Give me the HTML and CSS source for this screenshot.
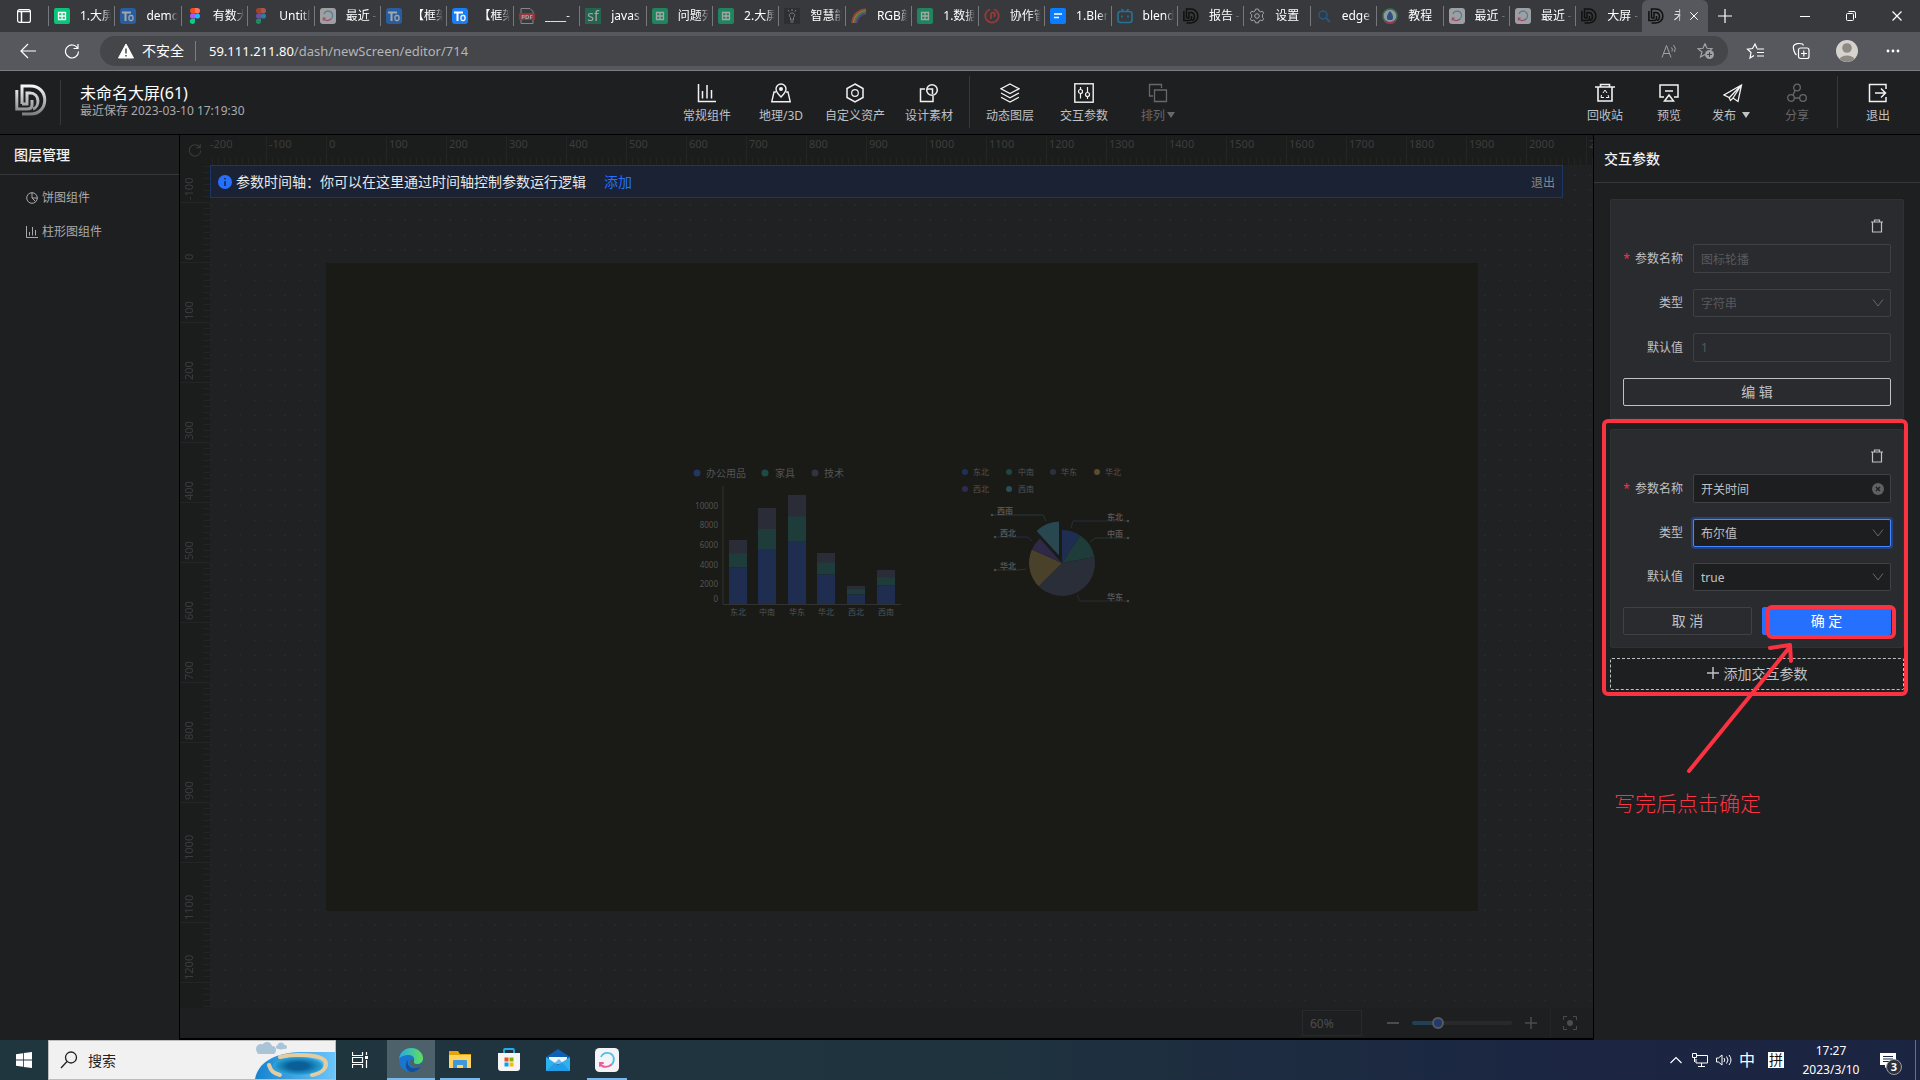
FILE: index.html
```html
<!DOCTYPE html>
<html lang="zh-CN">
<head>
    <meta charset="UTF-8">
    <meta name="viewport" content="width=device-width, initial-scale=1.0">
    <title>未命名大屏(61)</title>
    <link rel="stylesheet" href="styles.css">
</head>
<body>
    <!-- shared icons -->
    <svg class="sprite" aria-hidden="true">
        <symbol id="sheet" viewBox="0 0 16 16"><rect width="16" height="16" rx="2" fill="#0dc279"/><path d="M4.5 4.5h7v7h-7zM8 4.5v7M4.5 8h7" fill="none" stroke="#fff" stroke-width="1.3"/></symbol>
        <symbol id="todoc" viewBox="0 0 16 16"><rect width="16" height="16" rx="3" fill="#1a7df5"/><path d="M2 4.500h9M5.500 4.500v8.500" fill="none" stroke="#fff" stroke-width="2"/><rect x="9" y="7.500" width="4" height="5" rx="1.500" fill="none" stroke="#fff" stroke-width="1.300"/></symbol>
        <symbol id="figma" viewBox="0 0 16 16"><path d="M8 0H5.700a2.600 2.600 0 0 0 0 5.300H8z" fill="#f24e1e"/><path d="M8 0h2.300a2.600 2.600 0 0 1 0 5.300H8z" fill="#ff7262"/><path d="M8 5.300H5.700a2.600 2.600 0 0 0 0 5.300H8z" fill="#a259ff"/><circle cx="10.400" cy="8" r="2.600" fill="#1abcfe"/><path d="M8 10.700H5.700A2.600 2.600 0 1 0 8 13.300z" fill="#0acf83"/></symbol>
        <symbol id="sync" viewBox="0 0 16 16"><rect width="16" height="16" rx="3" fill="#f4f4f6"/><path d="M4 6A4.500 4.500 0 0 1 12.500 6.500c.3 2-.3 3.500-1.500 4.700" fill="none" stroke="#4cc0ea" stroke-width="1.200"/><path d="M11 11c-2 2-6 2.500-7.500-.5M3.300 12.500V10h2.500" fill="none" stroke="#ee5b9a" stroke-width="1.200"/></symbol>
        <symbol id="bulb" viewBox="0 0 16 16"><rect width="16" height="16" fill="#27282b"/><path d="M6.500 12V9.500C4 7 6 5 8 5s4 2 1.500 4.500V12zM6.500 14h3M8 1v2M4 2l1 1.500M12 2l-1 1.500" fill="none" stroke="#bbb"/></symbol>
        <symbol id="rainbow" viewBox="0 0 16 16"><path d="M1 15C1.500 7 7 1.500 15 1" fill="none" stroke="#e34b3c" stroke-width="1.600"/><path d="M2.500 15C3 8 8 3 15 2.500" fill="none" stroke="#e8a73a" stroke-width="1.600"/><path d="M4 15C4.500 9 9 4.500 15 4" fill="none" stroke="#45b35a" stroke-width="1.600"/><path d="M5.500 15C6 10 10 6 15 5.500" fill="none" stroke="#784bc0" stroke-width="1.600"/></symbol>
        <symbol id="redring" viewBox="0 0 16 16"><path d="M6 1.500a6.700 6.700 0 1 0 4 0M7 11V6.500a2 2 0 1 1 2.500 2" fill="none" stroke="#e23b34" stroke-width="1.800"/></symbol>
        <symbol id="bluedoc" viewBox="0 0 16 16"><rect width="16" height="16" rx="2" fill="#0a7cff"/><path d="M4 6h8M4 9.500h5" stroke="#fff" stroke-width="1.600"/></symbol>
        <symbol id="bili" viewBox="0 0 16 16"><path d="M4.500 1l2 2.500M11.500 1l-2 2.500" stroke="#13a4dd" stroke-width="1.500"/><rect x="1" y="3.500" width="14" height="11" rx="2.500" fill="none" stroke="#13a4dd" stroke-width="1.600"/><path d="M5 7.500v2M11 7.500v2" stroke="#13a4dd" stroke-width="1.600"/></symbol>
        <symbol id="dlogo" viewBox="0 0 32 32"><g fill="none" stroke="currentColor" stroke-width="3"><path d="M1.800 6v19H12q5 0 5-4v-5"/><path d="M7 20V2h8.500c19 0 19 28 0 28H7"/><path d="M7 20h5V9h3c10 0 10 14 3 16"/></g></symbol>
        <symbol id="gear" viewBox="0 0 16 16"><path d="M8 1l1.500.2.500 1.800 1.500.8 2-.5 1.200 2-1.300 1.400v2.600l1.300 1.400-1.200 2-2-.5-1.500.8-.5 1.800h-3L6 13l-1.500-.8-2 .5-1.200-2 1.300-1.400V6.700L1.300 5.300l1.200-2 2 .5L6 3l.5-1.800z" fill="none" stroke="#a6a7aa"/><circle cx="8" cy="8" r="2.300" fill="none" stroke="#a6a7aa"/></symbol>
        <symbol id="lens" viewBox="0 0 16 16"><circle cx="7" cy="7" r="4" fill="none" stroke="#1673c0" stroke-width="1.500"/><path d="M10 10l4 4" stroke="#1673c0" stroke-width="1.800"/></symbol>
        <symbol id="ball" viewBox="0 0 16 16"><circle cx="8" cy="8" r="7" fill="#dfe6ee" stroke="#2ea56b" stroke-width="1.500"/><path d="M3 13a7 7 0 0 0 10 0" fill="none" stroke="#d33b66" stroke-width="2"/><path d="M8 3c3 3 4 7 2 9H6C4 10 5 6 8 3z" fill="#2a62b8"/></symbol>
        <symbol id="trash" viewBox="0 0 14 14"><path d="M1 3h12M4.500 3V1h5v2M2.500 3v10h9V3" fill="none" stroke="currentColor" stroke-width="1.200"/></symbol>
        <symbol id="chevron" viewBox="0 0 12 12"><path d="M1 2.500l5 6.500 5-6.500" fill="none" stroke="currentColor"/></symbol>
        <symbol id="close" viewBox="0 0 12 12"><path d="M1.500 1.500l9 9M10.500 1.500l-9 9" stroke="currentColor" stroke-width="1.200"/></symbol>
        <symbol id="reload" viewBox="0 0 16 16"><path d="M13.500 5A6.500 6.500 0 1 0 14.500 8.500M14 1v4.500H9.500" fill="none" stroke="currentColor" stroke-width="1.200"/></symbol>
    </svg>

    <!-- browser tabs -->
    <div class="tab-bar">
        <button class="tab-menu" aria-label="标签操作"><svg width="14" height="14" viewBox="0 0 14 14"><rect x=".6" y=".6" width="12.800" height="12.800" rx="2" fill="none" stroke="#fff" stroke-width="1.200"/><path d="M1 2.500h12M4.500 3v10" stroke="#fff" stroke-width="1.500"/></svg></button>
        <nav class="tabs">
            <a href="#" class="tab"><svg><use href="#sheet"/></svg><span>1.大屏</span></a>
            <a href="#" class="tab dim"><svg><use href="#todoc"/></svg><span>demo</span></a>
            <a href="#" class="tab"><svg><use href="#figma"/></svg><span>有数大</span></a>
            <a href="#" class="tab dim"><svg><use href="#figma"/></svg><span>Untitl</span></a>
            <a href="#" class="tab dim"><svg><use href="#sync"/></svg><span>最近 -</span></a>
            <a href="#" class="tab dim"><svg><use href="#todoc"/></svg><span>【框架</span></a>
            <a href="#" class="tab"><svg><use href="#todoc"/></svg><span>【框架</span></a>
            <a href="#" class="tab dim"><svg viewBox="0 0 16 16"><path d="M2 .5h9l3 3v12H2z" fill="#3a3b3e" stroke="#c8c8c8"/><rect y="5" width="16" height="7" rx="1" fill="#d9383a"/><text x="8" y="11" font-size="6" font-weight="700" text-anchor="middle" fill="#fff">PDF</text></svg><span>____-</span></a>
            <a href="#" class="tab dim"><svg viewBox="0 0 16 16"><rect width="16" height="16" fill="#128a5c"/><text x="8" y="13" font-size="14" text-anchor="middle" fill="#fff">sf</text></svg><span>javas</span></a>
            <a href="#" class="tab dim"><svg><use href="#sheet"/></svg><span>问题列</span></a>
            <a href="#" class="tab dim"><svg><use href="#sheet"/></svg><span>2.大屏</span></a>
            <a href="#" class="tab dim"><svg><use href="#bulb"/></svg><span>智慧能</span></a>
            <a href="#" class="tab dim"><svg><use href="#rainbow"/></svg><span>RGB颜</span></a>
            <a href="#" class="tab dim"><svg><use href="#sheet"/></svg><span>1.数据</span></a>
            <a href="#" class="tab dim"><svg><use href="#redring"/></svg><span>协作管</span></a>
            <a href="#" class="tab"><svg><use href="#bluedoc"/></svg><span>1.Blen</span></a>
            <a href="#" class="tab dim"><svg><use href="#bili"/></svg><span>blend</span></a>
            <a href="#" class="tab dim dark"><svg><use href="#dlogo"/></svg><span>报告 -</span></a>
            <a href="#" class="tab"><svg><use href="#gear"/></svg><span>设置</span></a>
            <a href="#" class="tab dim"><svg><use href="#lens"/></svg><span>edge</span></a>
            <a href="#" class="tab dim"><svg><use href="#ball"/></svg><span>教程</span></a>
            <a href="#" class="tab dim"><svg><use href="#sync"/></svg><span>最近 -</span></a>
            <a href="#" class="tab dim"><svg><use href="#sync"/></svg><span>最近 -</span></a>
            <a href="#" class="tab dark"><svg><use href="#dlogo"/></svg><span>大屏 -</span></a>
            <a href="#" class="tab dark active"><svg><use href="#dlogo"/></svg><span>未</span><svg class="tab-close"><use href="#close"/></svg></a>
        </nav>
        <button class="new-tab" aria-label="新标签"><svg width="14" height="14" viewBox="0 0 14 14"><path d="M7 0v14M0 7h14" stroke="#fff" stroke-width="1.200"/></svg></button>
        <div class="window-buttons">
            <button aria-label="最小化"><svg width="10" height="10" viewBox="0 0 10 10"><path d="M0 5.500h10" stroke="#fff"/></svg></button>
            <button aria-label="还原"><svg width="10" height="10" viewBox="0 0 10 10"><rect x=".5" y="2.500" width="7" height="7" rx="1" fill="none" stroke="#fff"/><path d="M2.500.5H8a1.500 1.500 0 0 1 1.500 1.500v5" fill="none" stroke="#fff"/></svg></button>
            <button aria-label="关闭"><svg width="12" height="12"><use href="#close"/></svg></button>
        </div>
    </div>

    <!-- address bar -->
    <div class="address-bar">
        <button class="nav-button" aria-label="后退"><svg width="16" height="16" viewBox="0 0 16 16"><path d="M16 8H1M8 1L1 8l7 7" fill="none" stroke="#fff" stroke-width="1.200"/></svg></button>
        <button class="nav-button" aria-label="刷新"><svg width="16" height="16"><use href="#reload"/></svg></button>
        <div class="address">
            <svg width="16" height="16" viewBox="0 0 16 16"><path d="M8 1L.5 15h15z" fill="#fff" stroke="#fff" stroke-linejoin="round"/><path d="M8 5.500v5M8 12v1.500" stroke="#45464a" stroke-width="1.500"/></svg>
            <span class="insecure">不安全</span>
            <span class="url"><b>59.111.211.80</b>/dash/newScreen/editor/714</span>
            <svg class="read" width="16" height="16" viewBox="0 0 16 16"><path d="M1 14.500L5.500 2.500 10 14.500M2.500 10.500h6M10.500 4.500q1.500 1.500.5 4M12.500 2q3 3 1 7" fill="none" stroke="#a0a1a4"/></svg>
            <svg width="18" height="18" viewBox="0 0 18 18"><path d="M8 1.500l2 4.800 5 .4-2 2M8 1.500L6 6.300l-5 .4 4 3.300-1.500 5L8 12.500" fill="none" stroke="#a0a1a4" stroke-width="1.200"/><circle cx="12.500" cy="12.500" r="4.500" fill="#a0a1a4"/><path d="M12.500 10v5M10 12.500h5" stroke="#45464a"/></svg>
        </div>
        <button class="bar-button" aria-label="收藏夹"><svg width="18" height="18" viewBox="0 0 18 18"><path d="M11 6.500L9 2 6.500 6.500l-5 .7L5 10.500 4 16l4-2.500" fill="none" stroke="#fff" stroke-width="1.200"/><path d="M11 7h7M11 10.500h7M11 14h7" stroke="#fff" stroke-width="1.200"/></svg></button>
        <button class="bar-button" aria-label="集锦"><svg width="18" height="18" viewBox="0 0 18 18"><rect x="6.500" y="6" width="10.500" height="10.500" rx="2" fill="none" stroke="#fff" stroke-width="1.200"/><path d="M11.800 8.500v6M9 11.500h6M4.500 13C2 11 1 6 1.500 4c1-2.500 6-3 9-2l1 1.500" fill="none" stroke="#fff" stroke-width="1.200"/></svg></button>
        <button class="bar-button" aria-label="个人资料"><svg width="22" height="22" viewBox="0 0 22 22"><circle cx="11" cy="11" r="11" fill="#d6d2cd"/><circle cx="11" cy="8" r="4.800" fill="#8f8984"/><path d="M3.500 19a8 5.500 0 0 1 15 0 11 11 0 0 1-15 0z" fill="#8f8984"/></svg></button>
        <button class="bar-button" aria-label="更多"><svg width="14" height="4" viewBox="0 0 14 4"><g fill="#fff"><circle cx="2" cy="2" r="1.400"/><circle cx="7" cy="2" r="1.400"/><circle cx="12" cy="2" r="1.400"/></g></svg></button>
    </div>

    <header class="app-header">
        <div class="brand">
            <div class="logo">
                <svg width="32" height="32" viewBox="0 0 32 32"><defs><linearGradient id="silver" x1="0" y1="0" x2="0" y2="32" gradientUnits="userSpaceOnUse"><stop offset="0" stop-color="#fff"/><stop offset="1" stop-color="#77787a"/></linearGradient></defs><g fill="none" stroke="url(#silver)" stroke-width="3"><path d="M1.800 6v19H12q5 0 5-4v-5"/><path d="M7 20V2h8.500c19 0 19 28 0 28H7"/><path d="M7 20h5V9h3c10 0 10 14 3 16"/></g></svg>
            </div>
            <div class="brand-text">
                <h1>未命名大屏(61)</h1>
                <p>最近保存 2023-03-10 17:19:30</p>
            </div>
        </div>
        <div class="tools">
            <button class="tool"><svg viewBox="0 0 20 20"><path d="M1.500 1v17.500H19M5.500 15.500V8M10 15.500V2M14.500 15.500V7" fill="none" stroke="currentColor" stroke-width="1.500"/></svg>常规组件</button>
            <button class="tool"><svg viewBox="0 0 20 20"><path d="M5 9H3L.8 18.700h18.400L17 9h-2" fill="none" stroke="currentColor" stroke-width="1.400"/><path d="M10 14C6 10 5 8 5 6a5 5 0 0 1 10 0c0 2-1 4-5 8z" fill="none" stroke="currentColor" stroke-width="1.400"/><circle cx="10" cy="6" r="2" fill="currentColor"/></svg>地理/3D</button>
            <button class="tool"><svg viewBox="0 0 20 20"><path d="M10 1l8 4.500v9L10 19l-8-4.500v-9z" fill="none" stroke="currentColor" stroke-width="1.500"/><circle cx="10" cy="10" r="3.300" fill="none" stroke="currentColor" stroke-width="1.200"/></svg>自定义资产</button>
            <button class="tool"><svg viewBox="0 0 20 20"><path d="M6 6H1.500v12.500H14V13M8 6h5.500v5" fill="none" stroke="currentColor" stroke-width="1.500"/><circle cx="13" cy="7" r="5.300" fill="none" stroke="currentColor" stroke-width="1.500"/></svg>设计素材</button>
            <i class="divider"></i>
            <button class="tool"><svg viewBox="0 0 20 20"><path d="M10 1l9 4.800-9 4.800-9-4.800zM1 10l9 4.800 9-4.800M1 14.200L10 19l9-4.800" fill="none" stroke="currentColor" stroke-width="1.300"/></svg>动态图层</button>
            <button class="tool"><svg viewBox="0 0 20 20"><rect x=".8" y=".8" width="18.400" height="18.400" fill="none" stroke="currentColor" stroke-width="1.400"/><path d="M6.500 4v2.500M6.500 11v4.500M13.500 4v5M13.500 14v2" stroke="currentColor" stroke-width="1.200"/><circle cx="6.500" cy="8.500" r="2" fill="none" stroke="currentColor" stroke-width="1.200"/><circle cx="13.500" cy="11.500" r="2" fill="none" stroke="currentColor" stroke-width="1.200"/></svg>交互参数</button>
            <button class="tool disabled" disabled><svg viewBox="0 0 20 20"><path d="M5 13H1.500V1.500h12V5M6.500 7h12v11.500h-12z" fill="none" stroke="currentColor" stroke-width="1.300"/></svg><span>排列<i class="caret"></i></span></button>
        </div>
        <div class="actions">
            <button class="tool"><svg viewBox="0 0 20 20"><path d="M0 4h20M5.500 4V1.500h9V4M3 4v14h14V4" fill="none" stroke="currentColor" stroke-width="1.600"/><path d="M8 10l2-3 2 3M13 12l1 2.500h-3M6.500 12L6 14.500h3" fill="none" stroke="currentColor"/></svg>回收站</button>
            <button class="tool"><svg viewBox="0 0 20 20"><path d="M5 14H1V2h18v12h-4M6 8h8" fill="none" stroke="currentColor" stroke-width="1.500"/><path d="M10 12l4.500 6h-9z" fill="none" stroke="currentColor" stroke-width="1.500"/></svg>预览</button>
            <button class="tool"><svg viewBox="0 0 20 20"><path d="M18.500 2L1 12l5 2.500 1.500 3L10 15l5 3.500zM18 2.500L6.500 14.500M18 2.500L10 15" fill="none" stroke="currentColor" stroke-width="1.300"/></svg><span>发布<i class="caret"></i></span></button>
            <button class="tool disabled" disabled><svg viewBox="0 0 20 20"><g fill="none" stroke="currentColor" stroke-width="1.300"><circle cx="10" cy="4.500" r="3.300"/><circle cx="4" cy="15" r="3.300"/><circle cx="16" cy="15" r="3.300"/><path d="M8 7.500L6 12M7.500 15h5"/></g></svg>分享</button>
            <i class="divider"></i>
            <button class="tool"><svg viewBox="0 0 20 20"><path d="M18 6V1.500H1.500v17H18V14M7 10h10M13 5.500l4.500 4.500-4.500 4.500" fill="none" stroke="currentColor" stroke-width="1.500"/></svg>退出</button>
        </div>
    </header>

    <main class="workspace">
        <aside class="layers">
            <h2>图层管理</h2>
            <ul>
                <li><svg width="12" height="12" viewBox="0 0 12 12"><circle cx="6" cy="6" r="5.300" fill="none" stroke="currentColor"/><path d="M6 .5V6h5.500M6 6l3.500 3.500" fill="none" stroke="currentColor"/></svg>饼图组件</li>
                <li><svg width="12" height="12" viewBox="0 0 12 12"><path d="M.5 0v11.500H12M3.500 9.500V6M6.500 9.500V1M9.500 9.500V4" fill="none" stroke="currentColor"/></svg>柱形图组件</li>
            </ul>
        </aside>

        <section class="canvas">
            <div class="corner"><svg width="14" height="14"><use href="#reload"/></svg></div>
            <div class="ruler-x">
                <span>-200</span><span>-100</span><span>0</span><span>100</span><span>200</span><span>300</span><span>400</span><span>500</span><span>600</span><span>700</span><span>800</span><span>900</span><span>1000</span><span>1100</span><span>1200</span><span>1300</span><span>1400</span><span>1500</span><span>1600</span><span>1700</span><span>1800</span><span>1900</span><span>2000</span><span>2100</span>
            </div>
            <div class="ruler-y">
                <span>-100</span><span>0</span><span>100</span><span>200</span><span>300</span><span>400</span><span>500</span><span>600</span><span>700</span><span>800</span><span>900</span><span>1000</span><span>1100</span><span>1200</span><span></span>
            </div>
            <div class="board">
                <div class="banner">
                    <svg width="14" height="14" viewBox="0 0 14 14"><circle cx="7" cy="7" r="7" fill="#2670ff"/><path d="M7 3v1.500M7 6v5" stroke="#1a2233" stroke-width="1.500"/></svg>
                    <p>参数时间轴：你可以在这里通过时间轴控制参数运行逻辑</p>
                    <a href="#">添加</a>
                    <button>退出</button>
                </div>
                <div class="stage">
                    <svg class="bar-chart" width="222" height="170" viewBox="0 0 222 170">
                        <g class="legend">
                            <circle cx="17" cy="23" r="3.500" fill="#223661"/><text x="26" y="27">办公用品</text>
                            <circle cx="85" cy="23" r="3.500" fill="#1f4a45"/><text x="95" y="27">家具</text>
                            <circle cx="135" cy="23" r="3.500" fill="#30343f"/><text x="144" y="27">技术</text>
                        </g>
                        <g class="scale">
                            <text x="38" y="59">10000</text><text x="38" y="78">8000</text><text x="38" y="98">6000</text><text x="38" y="118">4000</text><text x="38" y="137">2000</text><text x="38" y="152">0</text>
                        </g>
                        <g fill="#2a2d38"><path d="M49 90h18v14H49zM78 58h18v21H78zM108 45h18v22h-18zM137 103h18v10h-18zM167 136h18v4h-18zM197 120h18v8h-18z"/></g>
                        <g fill="#1e3c3a"><path d="M49 103.500h18v14H49zM78 79h18v20H78zM108 66.500h18V91h-18zM137 112.500h18v12h-18zM167 139.500h18v5h-18zM197 127.500h18v8h-18z"/></g>
                        <g fill="#1f2e50"><path d="M49 117.500h18V154H49zM78 99h18v55H78zM108 91h18v63h-18zM137 124.500h18V154h-18zM167 144.500h18v9.500h-18zM197 135.500h18V154h-18z"/></g>
                        <path d="M43 36v118.500h178" fill="none" stroke="#323331"/>
                        <g class="category">
                            <text x="58" y="165">东北</text><text x="87" y="165">中南</text><text x="117" y="165">华东</text><text x="146" y="165">华北</text><text x="176" y="165">西北</text><text x="206" y="165">西南</text>
                        </g>
                    </svg>
                    <svg class="pie-chart" width="190" height="160" viewBox="0 0 190 160">
                        <circle cx="15" cy="22" r="3" fill="#1f3157"/><text x="23" y="25">东北</text>
                        <circle cx="59" cy="22" r="3" fill="#1f4541"/><text x="68" y="25">中南</text>
                        <circle cx="103" cy="22" r="3" fill="#2d313d"/><text x="111" y="25">华东</text>
                        <circle cx="147" cy="22" r="3" fill="#5a4d2b"/><text x="155" y="25">华北</text>
                        <circle cx="15" cy="39" r="3" fill="#302a52"/><text x="23" y="42">西北</text>
                        <circle cx="59" cy="39" r="3" fill="#2a4e58"/><text x="68" y="42">西南</text>
                        <path d="M112 113V80a33 33 0 0 1 18.200 5.500z" fill="#1f2e50"/>
                        <path d="M112 113l18.200-27.500A33 33 0 0 1 144.500 107z" fill="#1e3c3a"/>
                        <path d="M112 113l32.500-6a33 33 0 0 1-55.800 29.300z" fill="#2a2e38"/>
                        <path d="M112 113l-23.300 23.300A33 33 0 0 1 81.900 99.600z" fill="#4a412b"/>
                        <path d="M112 113L81.900 99.600a33 33 0 0 1 8-11.100z" fill="#2d2947"/>
                        <path d="M109 105.500L86.500 81A34 34 0 0 1 109 71.500z" fill="#284750"/>
                        <path d="M42 65h51l3 6" fill="none" stroke="#24383b"/>
                        <path d="M45 87h32l5 4M177 71h-54l-2 7" fill="none" stroke="#272c43"/>
                        <path d="M45 120h24l7-1" fill="none" stroke="#353225"/>
                        <path d="M177 88h-32l-5 4" fill="none" stroke="#203834"/>
                        <path d="M177 151h-47l-3-6" fill="none" stroke="#292c33"/>
                        <g fill="#4a4b49"><circle cx="42" cy="65" r="1.300"/><circle cx="45" cy="87" r="1.300"/><circle cx="45" cy="120" r="1.300"/><circle cx="178" cy="71" r="1.300"/><circle cx="178" cy="88" r="1.300"/><circle cx="178" cy="151" r="1.300"/></g>
                        <g class="callout"><text x="47" y="64">西南</text><text x="50" y="86">西北</text><text x="50" y="119">华北</text><text x="157" y="70">东北</text><text x="157" y="87">中南</text><text x="157" y="150">华东</text></g>
                    </svg>
                </div>
            </div>
            <div class="zoom-bar">
                <input type="text" class="zoom-value" value="60%" aria-label="缩放比例" readonly>
                <button aria-label="缩小"><svg width="12" height="12" viewBox="0 0 12 12"><path d="M0 6h12" stroke="currentColor" stroke-width="2"/></svg></button>
                <input type="range" class="zoom-range" min="0" max="100" value="23" aria-label="缩放">
                <button aria-label="放大"><svg width="12" height="12" viewBox="0 0 12 12"><path d="M0 6h12M6 0v12" stroke="currentColor" stroke-width="1.500"/></svg></button>
                <button class="fit" aria-label="适应屏幕"><svg width="14" height="14" viewBox="0 0 14 14"><path d="M.5 4V.5H4M10 .5h3.500V4M13.500 10v3.500H10M4 13.500H.5V10" fill="none" stroke="currentColor"/><circle cx="7" cy="7" r="3" fill="currentColor"/></svg></button>
            </div>
        </section>

        <aside class="params">
            <h2>交互参数</h2>
            <div class="param-list">
                <form class="card">
                    <button type="button" class="delete" aria-label="删除"><svg width="14" height="14"><use href="#trash"/></svg></button>
                    <div class="field">
                        <label class="required" for="name1">参数名称</label>
                        <input type="text" id="name1" value="图标轮播" disabled>
                    </div>
                    <div class="field">
                        <label for="type1">类型</label>
                        <select id="type1" disabled><option>字符串</option></select>
                        <svg class="suffix"><use href="#chevron"/></svg>
                    </div>
                    <div class="field">
                        <label for="value1">默认值</label>
                        <input type="text" id="value1" value="1" disabled>
                    </div>
                    <div class="buttons">
                        <button type="button" class="btn edit">编 辑</button>
                    </div>
                </form>
                <form class="card">
                    <button type="button" class="delete" aria-label="删除"><svg width="14" height="14"><use href="#trash"/></svg></button>
                    <div class="field">
                        <label class="required" for="name2">参数名称</label>
                        <input type="text" id="name2" value="开关时间">
                        <svg class="suffix" viewBox="0 0 12 12"><circle cx="6" cy="6" r="6" fill="#5f6063"/><path d="M4 4l4 4M8 4L4 8" stroke="#1d1e20" stroke-width="1.200"/></svg>
                    </div>
                    <div class="field">
                        <label for="type2">类型</label>
                        <select id="type2" class="focused"><option>布尔值</option></select>
                        <svg class="suffix"><use href="#chevron"/></svg>
                    </div>
                    <div class="field">
                        <label for="value2">默认值</label>
                        <select id="value2"><option>true</option></select>
                        <svg class="suffix"><use href="#chevron"/></svg>
                    </div>
                    <div class="buttons">
                        <button type="button" class="btn">取 消</button>
                        <button type="button" class="btn primary">确 定</button>
                    </div>
                </form>
                <button class="add-param"><svg width="12" height="12" viewBox="0 0 12 12"><path d="M0 6h12M6 0v12" stroke="currentColor" stroke-width="1.500"/></svg>添加交互参数</button>
            </div>

            <!-- red markup over the panel -->
            <div class="mark mark-card"></div>
            <div class="mark mark-button"></div>
            <svg class="mark-arrow" width="110" height="134" viewBox="0 0 110 134"><path d="M4 128L104 5M85 5l20-3 1 16" fill="none" stroke="#fb3241" stroke-width="4" stroke-linecap="round" stroke-linejoin="round"/></svg>
            <p class="mark-text">写完后点击确定</p>
        </aside>
    </main>

    <footer class="taskbar">
        <button class="task" aria-label="开始"><svg width="16" height="16" viewBox="0 0 16 16"><path d="M0 2.200L7 1.200v6.300H0zM7.800 1L16 0v7.500H7.800zM0 8.400h7v6.400l-7-1zM7.800 8.400H16V16l-8.200-1.100z" fill="#fff"/></svg></button>
        <div class="search">
            <svg width="18" height="18" viewBox="0 0 18 18"><circle cx="11" cy="6.500" r="5.500" fill="none" stroke="#222" stroke-width="1.300"/><path d="M7 10.500L1 17" stroke="#222" stroke-width="1.300"/></svg>
            <input type="text" placeholder="搜索" aria-label="搜索">
            <svg class="doodle" width="80" height="38" viewBox="0 0 80 38"><defs><linearGradient id="sea"><stop offset="0" stop-color="#1583cf"/><stop offset="1" stop-color="#6cc5fb"/></linearGradient><radialGradient id="hole"><stop offset=".4" stop-color="#0b5f98"/><stop offset="1" stop-color="#2aa7dc"/></radialGradient></defs><path d="M0 38C3 22 18 12 45 11h35v27z" fill="url(#sea)"/><g fill="#a9c4d6"><circle cx="6" cy="8" r="5"/><circle cx="12" cy="6" r="5"/><circle cx="17" cy="9" r="4"/><rect x="2" y="8" width="18" height="5" rx="2.500"/><circle cx="26" cy="5" r="3.500"/><rect x="21" y="4" width="11" height="4" rx="2"/></g><path d="M25 16c12-3 46-4 46 7 0 6-6 9-14 11M14 24c2 6 4 8 11 10" fill="none" stroke="#e3cda0" stroke-width="4" stroke-linecap="round"/><ellipse cx="43" cy="25" rx="25" ry="9" fill="url(#hole)"/></svg>
        </div>
        <button class="task" aria-label="任务视图"><svg width="16" height="16" viewBox="0 0 16 16"><path d="M.5 0v3.500h10V0M.5 16v-3.500h10V16M.5 5.500h10v5H.5zM14.500 0v3M14.500 8v8" fill="none" stroke="#fff" stroke-width="1.200"/><path d="M13 4h3v3h-3z" fill="#fff"/></svg></button>
        <div class="apps">
            <button class="task open current" aria-label="Edge"><svg width="24" height="24" viewBox="0 0 24 24"><defs><linearGradient id="e1"><stop offset="0" stop-color="#2aa8e8"/><stop offset="1" stop-color="#5fe05a"/></linearGradient></defs><circle cx="12" cy="12" r="12" fill="#1976cf"/><path d="M0 11C1 4 6 0 12 0c7 0 12 5 12 10 0 4-3 6-6 6-3 0-4-1-3-3 1-3-1-6-5-6C5 7 1 9 0 11z" fill="url(#e1)"/><path d="M10 11c-3 3-1 9 5 9 4 0 6-1 7-2-2 4-6 6-10 6C6 23 5 14 10 11z" fill="#124f9e"/><path d="M15 13c-1 2 1 3.500 3.500 3.500 2 0 4-1 5-2.500l-1 4c-5 3-12 1-12-4 0-3 5-4 4.500-1z" fill="#4c6169"/></svg></button>
            <button class="task open" aria-label="文件资源管理器"><svg width="22" height="20" viewBox="0 0 22 20"><path d="M0 1h9l2 3h11v14H0z" fill="#e5a50a"/><path d="M0 5h22v13H0z" fill="#ffd35c"/><path d="M4 18v-7q0-1 1-1h12q1 0 1 1v7h-4v-3H8v3z" fill="#3f97dd"/></svg></button>
            <button class="task" aria-label="应用商店"><svg width="24" height="24" viewBox="0 0 24 24"><path d="M7 6V2q0-1 1-1h8q1 0 1 1v4" fill="none" stroke="#23aef0" stroke-width="1.800"/><path d="M1 5h22v15q0 3-3 3H4q-3 0-3-3z" fill="#f5f5f5"/><path d="M7.500 9.500h4v4h-4z" fill="#f04e1f"/><path d="M12.500 9.500h4v4h-4z" fill="#7cba00"/><path d="M7.500 14.500h4v4h-4z" fill="#00a4ef"/><path d="M12.500 14.500h4v4h-4z" fill="#ffb900"/></svg></button>
            <button class="task" aria-label="邮件"><svg width="24" height="24" viewBox="0 0 24 24"><path d="M0 9L12 1l12 8v4H0z" fill="#0f5fb3"/><path d="M3 9h18v7H3z" fill="#eef4fa"/><path d="M0 9l12 8 12-8v14H0z" fill="#2fb0f0"/><path d="M0 23L13 11l11 12z" fill="#1b8fdf" opacity=".6"/></svg></button>
            <button class="task open" aria-label="文档"><svg width="24" height="24" viewBox="0 0 16 16"><use href="#sync"/></svg></button>
        </div>
        <div class="tray">
            <span class="tray-icon"><svg width="12" height="8" viewBox="0 0 12 8"><path d="M.5 7L6 1.500 11.500 7" fill="none" stroke="#fff" stroke-width="1.200"/></svg></span>
            <span class="tray-icon"><svg width="16" height="14" viewBox="0 0 16 14"><path d="M5 2.500h10.500V10H4V6M9.500 10v3M6 13.500h7M.5.500h4v4h-4zM2.500 4.500V9" fill="none" stroke="#fff"/></svg></span>
            <span class="tray-icon"><svg width="16" height="14" viewBox="0 0 16 14"><path d="M.5 5v4h2L6 12V2L2.500 5zM8 5q1.500 2 0 4M10.500 3.500q3 3.500 0 7M13 2q4 5 0 10" fill="none" stroke="#fff"/></svg></span>
            <span class="ime">中</span>
            <span class="pinyin"><b>拼</b></span>
            <span class="clock">17:27<br>2023/3/10</span>
            <span class="notice"><svg width="16" height="15" viewBox="0 0 16 15"><path d="M0 0h16v12H9l-4 3v-3H0z" fill="#fff"/><path d="M3 3.500h10M3 6h10M3 8.500h6" stroke="#1c2843"/></svg><b>3</b></span>
        </div>
    </footer>
</body>
</html>
```

FILE: styles.css
```css
:root {
    --panel: #1e1f21;
    --card: #2a2b2f;
    --line: #404145;
    --text: #c0c1c4;
    --blue: #2670ff;
    --red: #fb3241;
    --font: "Noto Sans", "Noto Sans CJK SC", sans-serif;
}

* {
    box-sizing: border-box;
    margin: 0;
    padding: 0;
}

body {
    display: flex;
    flex-direction: column;
    height: 100vh;
    overflow: hidden;
    background: var(--panel);
    color: var(--text);
    font-family: var(--font);
    font-size: 12px;
    line-height: 16px;
}

button, input, select {
    font-family: inherit;
    font-size: 12px;
    color: inherit;
    background: none;
    border: none;
    outline: none;
}

button {
    cursor: pointer;
}

a {
    color: inherit;
    text-decoration: none;
}

svg {
    flex: none;
}

.sprite {
    position: absolute;
    width: 0;
    height: 0;
}

/* browser tabs */
.tab-bar {
    display: flex;
    flex: none;
    height: 32px;
    background: #38393d;
    color: #fff;
}

.tab-menu {
    display: flex;
    align-items: center;
    justify-content: center;
    width: 48px;
}

.tabs {
    display: flex;
    flex: 1;
    min-width: 0;
}

.tab {
    position: relative;
    display: flex;
    flex: 1;
    min-width: 0;
    align-items: center;
    padding: 0 3px 0 6px;
}

.tab::before {
    content: "";
    position: absolute;
    left: 0;
    top: 6px;
    height: 20px;
    border-left: 1px solid #77787b;
}

.tab svg {
    width: 16px;
    height: 16px;
    margin-right: 10px;
}

.tab.dim svg {
    opacity: 0.55;
}

.tab.dark svg:first-child {
    color: #101010;
    opacity: 1;
}

.tab span {
    flex: 1;
    min-width: 0;
    overflow: hidden;
    white-space: nowrap;
    mask-image: linear-gradient(to right, #000 70%, transparent);
}

.tab.active {
    background: #57585d;
    border-radius: 6px 6px 0 0;
}

.tab.active::before {
    display: none;
}

.tab.active .tab-close {
    width: 10px;
    height: 10px;
    margin: 0 6px 0 8px;
}

.new-tab {
    display: flex;
    align-items: center;
    justify-content: center;
    width: 34px;
}

.window-buttons {
    display: flex;
    margin-left: 40px;
}

.window-buttons button {
    width: 46px;
    display: flex;
    align-items: center;
    justify-content: center;
}

/* address bar */
.address-bar {
    display: flex;
    flex: none;
    align-items: center;
    height: 39px;
    padding: 0 4px 0 6px;
    background: #57585d;
    border-bottom: 1px solid #7c7d81;
    color: #fff;
}

.nav-button, .bar-button {
    display: flex;
    align-items: center;
    justify-content: center;
    width: 44px;
    height: 30px;
}

.bar-button {
    width: 46px;
}

.address {
    display: flex;
    flex: 1;
    align-items: center;
    height: 30px;
    margin: 0 4px 0 6px;
    padding: 0 13px 0 18px;
    border-radius: 15px;
    background: #45464a;
    font-size: 14px;
    line-height: 20px;
}

.insecure {
    margin-left: 8px;
    padding-right: 11px;
    border-right: 1px solid #7c7d81;
}

.url {
    flex: 1;
    margin-left: 13px;
    font-size: 13px;
    color: #b4b5b8;
}

.url b {
    font-weight: 400;
    color: #fff;
}

.read {
    margin-right: 20px;
}

/* editor header */
.app-header {
    display: grid;
    grid-template-columns: 34.9% auto 1fr;
    flex: none;
    height: 64px;
    border-bottom: 1px solid #000;
}

.brand {
    display: flex;
    align-items: center;
}

.logo {
    display: flex;
    align-items: center;
    width: 61px;
    height: 45px;
    padding: 0 0 5px 15px;
    border-right: 1px solid #37383b;
}

.brand-text {
    padding: 0 0 3px 19px;
}

.brand h1 {
    font-size: 16px;
    font-weight: 400;
    line-height: 20px;
    color: #fff;
}

.brand p {
    color: #a9aaad;
}

.tools, .actions {
    display: flex;
}

.actions {
    justify-content: flex-end;
    padding-right: 10px;
}

.tool {
    display: flex;
    flex-direction: column;
    align-items: center;
    width: 74px;
    padding-top: 12px;
    line-height: 16px;
    white-space: nowrap;
}

.actions .tool {
    width: 64px;
}

.tool svg {
    width: 20px;
    height: 20px;
    margin-bottom: 5px;
    color: #f2f2f2;
}

.tool.disabled, .tool.disabled svg {
    color: #67686b;
}

.caret {
    display: inline-block;
    margin-left: 2px;
    border: 4px solid transparent;
    border-top: 6px solid currentColor;
    border-bottom: 0;
    vertical-align: 2px;
}

.actions .caret {
    margin: 0 4px 0 6px;
}

.divider {
    width: 1px;
    height: 52px;
    margin: 5px 3px;
    background: #37383b;
}

.actions .divider {
    margin: 5px 8px;
}

/* workspace */
.workspace {
    display: flex;
    flex: 1;
    min-height: 0;
}

h2 {
    font-size: 14px;
    font-weight: 500;
    color: #f2f2f2;
}

.layers {
    width: 180px;
    border-right: 1px solid #000;
}

.layers h2 {
    padding-left: 14px;
    line-height: 39px;
    border-bottom: 1px solid #37383b;
}

.layers ul {
    padding-top: 6px;
    list-style: none;
}

.layers li {
    display: flex;
    align-items: center;
    gap: 4px;
    height: 34px;
    padding-left: 26px;
    color: #a9aaad;
}

.canvas {
    display: grid;
    flex: 1;
    grid-template: 30px minmax(0, 1fr) 32px / 30px minmax(0, 1fr);
    min-width: 0;
    overflow: hidden;
    color: #3b3c3d;
    font-size: 11px;
}

.corner {
    display: flex;
    align-items: center;
    justify-content: center;
    background: #1b1d1c;
}

.ruler-x {
    display: flex;
    overflow: hidden;
    background: repeating-linear-gradient(to right, transparent 0 2px, #232524 2px 3px, transparent 3px 6px) left bottom / 100% 7px no-repeat #1b1d1c;
}

.ruler-x span {
    flex: none;
    width: 60px;
    padding-left: 2px;
    border-left: 1px solid #232524;
    line-height: 18px;
}

.ruler-x span:first-child {
    width: 56px;
    padding: 0;
    border: none;
}

.ruler-y {
    display: flex;
    flex-direction: column;
    overflow: hidden;
    background: repeating-linear-gradient(to bottom, transparent 0 1px, #232524 1px 2px, transparent 2px 6px) right top / 7px 100% no-repeat #1b1d1c;
}

.ruler-y span {
    flex: none;
    height: 60px;
    padding-top: 2px;
    border-top: 1px solid #232524;
    writing-mode: vertical-rl;
    transform: rotate(180deg);
    line-height: 18px;
}

.ruler-y span:first-child {
    height: 38px;
}

.board {
    position: relative;
    overflow: hidden;
    background: radial-gradient(circle, #28292a 1px, transparent 1px) 8px 3px / 15px 15px #202122;
}

.banner {
    display: flex;
    align-items: center;
    height: 33px;
    margin-right: 30px;
    padding: 0 7px;
    background: #1a2233;
    border: 1px solid #1d3668;
    color: #e8e9eb;
    font-size: 14px;
}

.banner p {
    margin: 0 18px 0 4px;
}

.banner a {
    color: var(--blue);
}

.banner button {
    margin-left: auto;
    color: #85878c;
}

.stage {
    position: absolute;
    left: 116px;
    top: 98px;
    width: 1152px;
    height: 648px;
    background: #1a1a17;
}

.stage text {
    fill: #535453;
    font-size: 8px;
}

.bar-chart {
    position: absolute;
    left: 354px;
    top: 187px;
}

.pie-chart {
    position: absolute;
    left: 624px;
    top: 187px;
}

.stage .legend text {
    font-size: 10px;
}

.scale text {
    text-anchor: end;
}

.category text {
    text-anchor: middle;
}

.callout text {
    font-weight: 700;
}

.zoom-bar {
    grid-column: 1 / -1;
    display: flex;
    align-items: center;
    justify-content: flex-end;
    background: var(--panel);
    border-bottom: 2px solid #000;
    color: #4b4c4f;
}

.zoom-bar button {
    display: flex;
    align-items: center;
    justify-content: center;
    width: 38px;
}

.zoom-value {
    width: 60px;
    height: 26px;
    margin-right: 12px;
    padding-left: 7px;
    border: 1px solid #28292b;
}

.zoom-range {
    appearance: none;
    width: 100px;
    height: 4px;
    border-radius: 2px;
    background: linear-gradient(to right, #1f4055 25%, #29292b 25%);
}

.zoom-range::-webkit-slider-thumb {
    appearance: none;
    width: 12px;
    height: 12px;
    border: 2px solid #58595b;
    border-radius: 50%;
    background: #223a6d;
}

.zoom-bar .fit {
    width: 43px;
    height: 30px;
    padding-right: 5px;
    border-left: 1px solid #242527;
}

/* parameter panel */
.params {
    position: relative;
    width: 327px;
    border-left: 1px solid #000;
}

.params h2 {
    height: 48px;
    padding-left: 10px;
    line-height: 47px;
    border-bottom: 1px solid #37383b;
}

.param-list {
    display: flex;
    flex-direction: column;
    gap: 10px;
    padding: 16px 16px 0;
}

.card {
    display: flex;
    flex-direction: column;
    gap: 16px;
    padding: 19px 12px 12px;
    background: var(--card);
    border: 1px solid #303135;
    border-radius: 2px;
}

.delete {
    display: flex;
    align-self: flex-end;
    height: 14px;
    margin: 0 7px -5px 0;
}

.field {
    position: relative;
    display: flex;
    align-items: center;
}

.field label {
    width: 60px;
    margin-right: 10px;
    text-align: right;
}

.required::before {
    content: "*";
    margin-right: 5px;
    color: var(--red);
}

.field input, .field select {
    appearance: none;
    flex: 1;
    min-width: 0;
    height: 28px;
    padding: 0 7px;
    background: #1d1e20;
    border: 1px solid var(--line);
    border-radius: 2px;
}

.field input {
    height: 29px;
}

.field input:disabled, .field select:disabled {
    background: var(--card);
    color: #58595d;
    opacity: 1;
}

.field .focused {
    border-color: #4a87ff;
    box-shadow: 0 0 0 2px #26407a;
}

.suffix {
    position: absolute;
    right: 7px;
    width: 12px;
    height: 12px;
    color: #66676a;
}

.buttons {
    display: flex;
    gap: 10px;
}

.btn {
    flex: 1;
    height: 28px;
    padding-bottom: 2px;
    border: 1px solid var(--line);
    border-radius: 2px;
    font-size: 14px;
}

.btn.edit {
    border-color: var(--text);
}

.btn.primary {
    background: var(--blue);
    border-color: var(--blue);
    color: #fff;
}

.add-param {
    display: flex;
    align-items: center;
    justify-content: center;
    gap: 5px;
    height: 32px;
    padding-bottom: 2px;
    border: 1px dashed var(--text);
    border-radius: 2px;
    font-size: 14px;
}

.mark {
    position: absolute;
    border: 4px solid var(--red);
    border-radius: 6px;
    pointer-events: none;
}

.mark-card {
    left: 8px;
    top: 284px;
    width: 306px;
    height: 277px;
}

.mark-button {
    left: 172px;
    top: 470px;
    width: 130px;
    height: 34px;
}

.mark-arrow {
    position: absolute;
    left: 91px;
    top: 508px;
    pointer-events: none;
}

.mark-text {
    position: absolute;
    left: 20px;
    top: 653px;
    font-size: 21px;
    font-weight: 300;
    line-height: 30px;
    color: var(--red);
}

/* windows taskbar */
.taskbar {
    display: flex;
    flex: none;
    height: 40px;
    background: linear-gradient(to right, #20363e, #1f333e 50%, #1b2642 80%, #1b2542);
    color: #fff;
}

.task {
    display: flex;
    align-items: center;
    justify-content: center;
    width: 48px;
    height: 40px;
}

.task.open {
    background: linear-gradient(#76b9ed, #76b9ed) center bottom / 40px 2px no-repeat;
}

.task.current {
    background: linear-gradient(#76b9ed, #76b9ed) center bottom / 48px 2px no-repeat #4c6169;
}

.search {
    display: flex;
    align-items: center;
    width: 288px;
    padding-left: 11px;
    background: #f1f1f1;
    border: 1px solid #bcbcbc;
}

.search input {
    flex: 1;
    min-width: 0;
    margin-left: 10px;
    font-size: 14px;
}

.search input::placeholder {
    color: #222;
}

.apps {
    display: flex;
    gap: 1px;
    margin-left: 3px;
}

.tray {
    display: flex;
    align-items: center;
    margin-left: auto;
    margin-right: 4px;
    padding-right: 7px;
    border-right: 1px solid #6a7184;
}

.tray-icon {
    display: flex;
    justify-content: center;
    width: 24px;
}

.ime {
    width: 22px;
    font-size: 16px;
    text-align: center;
}

.pinyin {
    display: flex;
    justify-content: center;
    width: 36px;
}

.pinyin b {
    width: 16px;
    background: #fff;
    color: #111;
    font-size: 14px;
    font-weight: 400;
    text-align: center;
}

.clock {
    width: 74px;
    line-height: 19px;
    text-align: center;
}

.notice {
    position: relative;
    display: flex;
    justify-content: center;
    width: 40px;
}

.notice b {
    position: absolute;
    left: 18px;
    top: 6px;
    width: 16px;
    height: 16px;
    border: 1px solid #9a9da5;
    border-radius: 50%;
    background: #2d3038;
    font-size: 11px;
    line-height: 14px;
    text-align: center;
}
```
